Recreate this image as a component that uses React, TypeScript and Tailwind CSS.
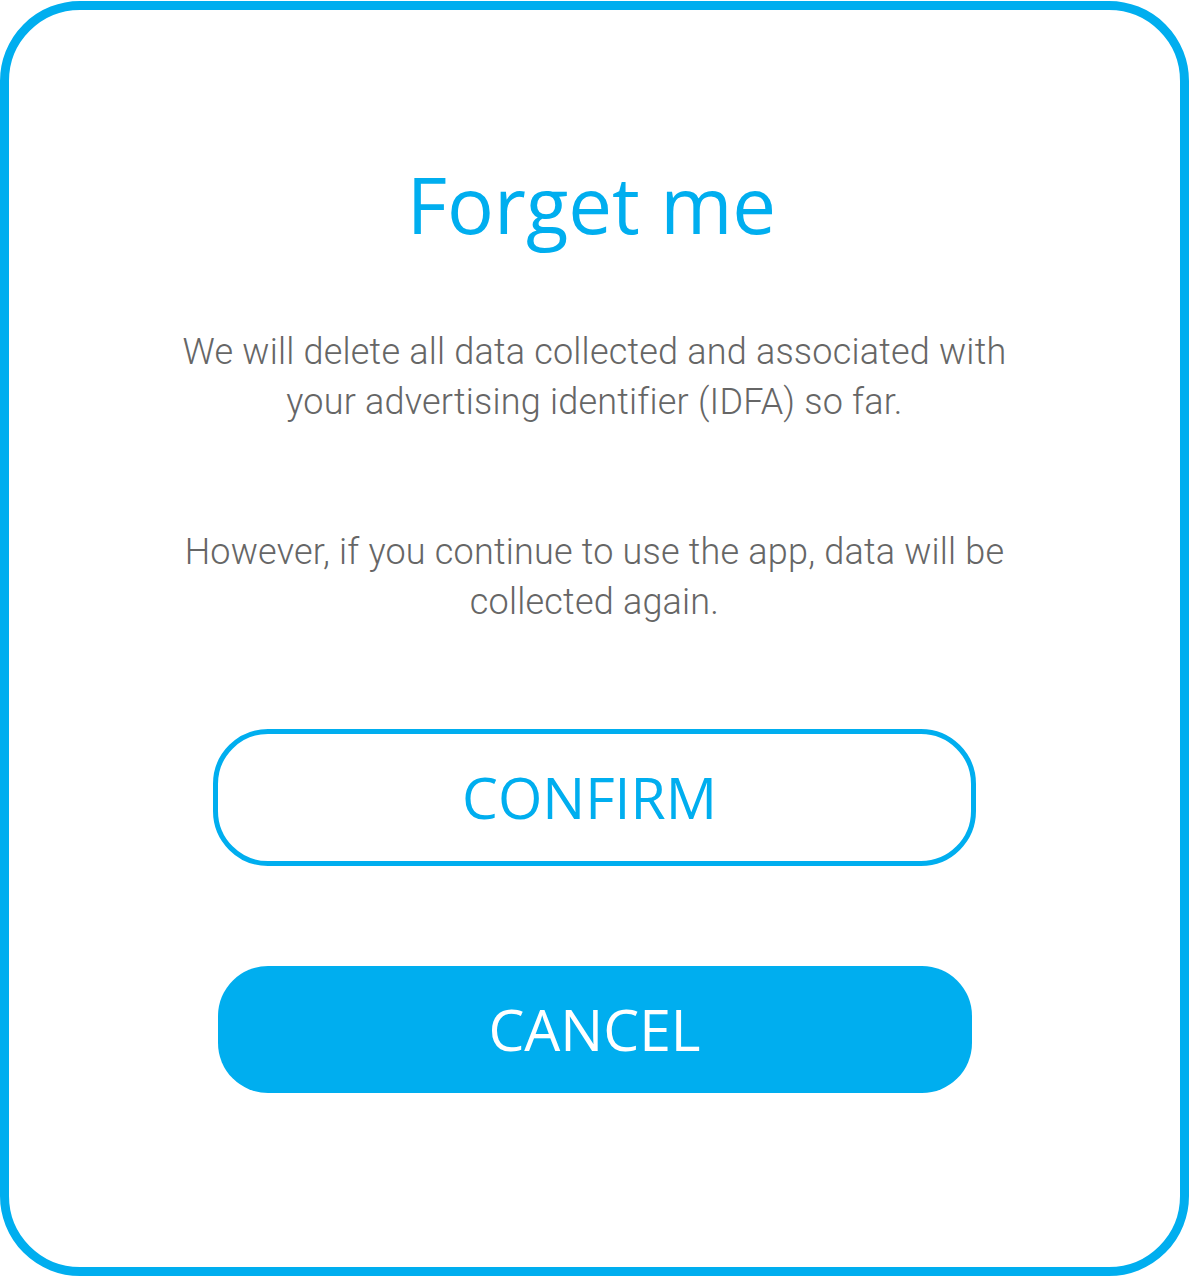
import React from "react";

export default function App() {
  return (
    <div className="w-[1190px] h-[1276px] bg-white pt-px">
      <div className="w-[1189px] h-[1275px] border-[9px] border-[#00aeef] rounded-[80px] flex flex-col items-center pt-[154px]">
        <h1 className="text-[78px] leading-[81px] text-[#00aeef] text-center ml-[-6px] font-['Open_Sans',sans-serif]">
          Forget me
        </h1>
        <div className="mt-[82px] w-[900px] flex flex-col items-center text-[36px] leading-[50px] font-light tracking-[0.2px] text-[#666666] text-center font-['Roboto',sans-serif]">
          <p>
            We will delete all data collected and associated with
            <br />
            your advertising identifier (IDFA) so far.
          </p>
          <p className="mt-[100px]">
            However, if you continue to use the app, data will be
            <br />
            collected again.
          </p>
        </div>
        <button className="mt-[102px] w-[763px] h-[137px] border-[5px] border-[#00aeef] rounded-[55px] bg-white text-[#00aeef] text-[57px] flex items-center justify-center pr-[10px] font-['Open_Sans',sans-serif]">
          CONFIRM
        </button>
        <button className="mt-[100px] w-[754px] h-[127px] rounded-[50px] bg-[#00aeef] text-white text-[57px] flex items-center justify-center font-['Open_Sans',sans-serif]">
          CANCEL
        </button>
      </div>
    </div>
  );
}
